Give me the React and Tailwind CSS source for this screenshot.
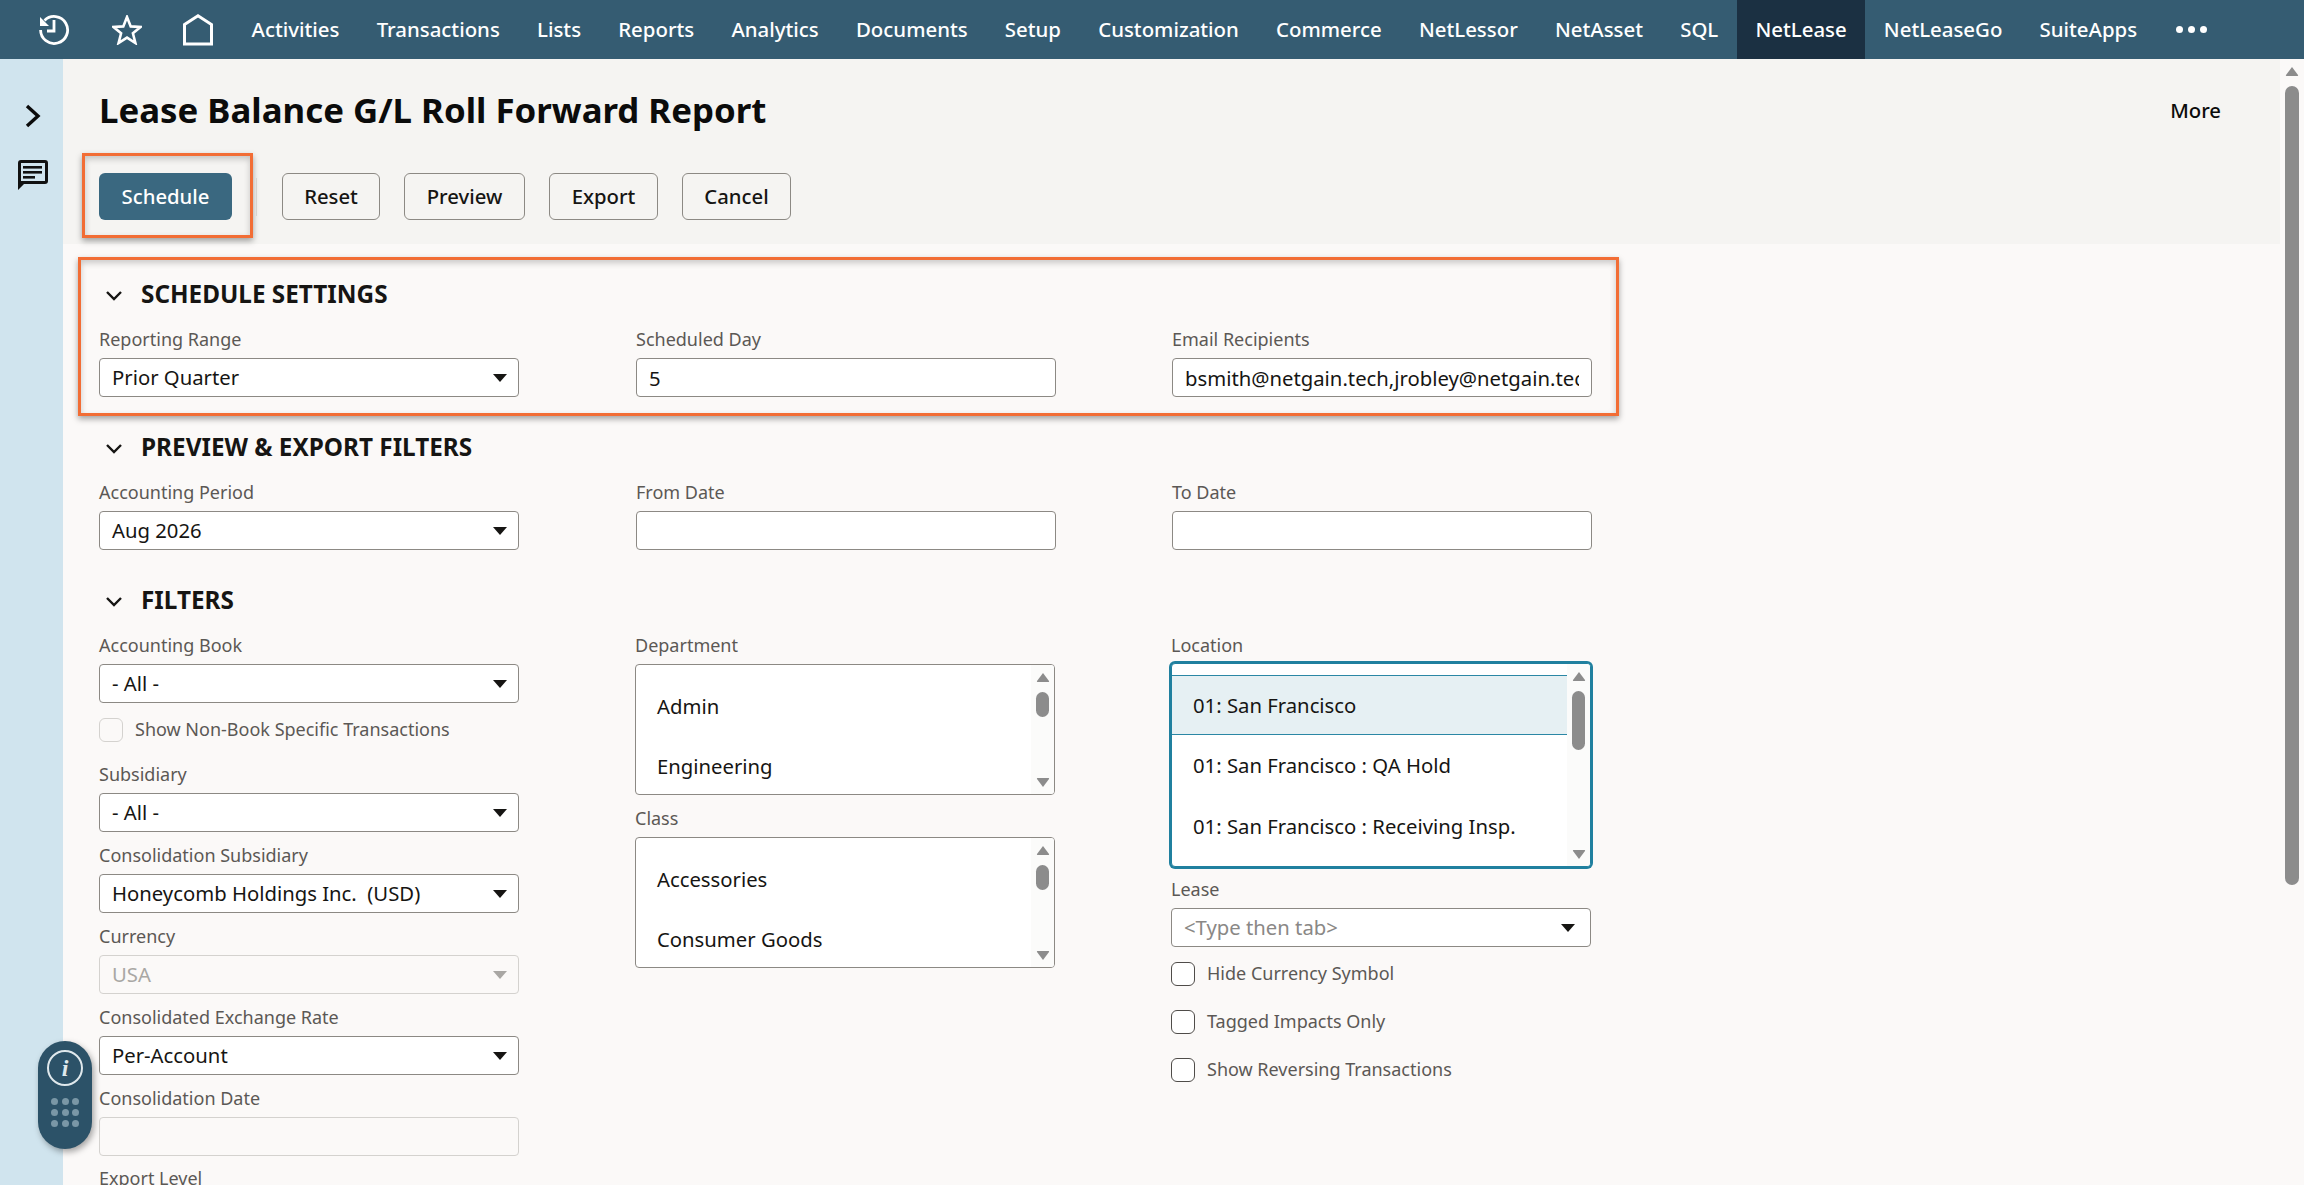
const FONT = "font-['Noto_Sans',sans-serif]";
const NAV = [
  ["Activities", false], ["Transactions", false], ["Lists", false], ["Reports", false], ["Analytics", false],
  ["Documents", false], ["Setup", false], ["Customization", false], ["Commerce", false], ["NetLessor", false],
  ["NetAsset", false], ["SQL", false], ["NetLease", true], ["NetLeaseGo", false], ["SuiteApps", false],
];

function Tri({ up, className }) {
  return (
    <svg width="14" height="11" viewBox="0 0 14 11" className={className}>
      <path d={up ? "M7 1 L13 9 Q13.5 10 12.5 10 L1.5 10 Q.5 10 1 9 Z" : "M7 10 L13 2 Q13.5 1 12.5 1 L1.5 1 Q.5 1 1 2 Z"} fill="#8c8c8c" />
    </svg>
  );
}

function Caret({ disabled }) {
  return (
    <svg width="14" height="8" viewBox="0 0 14 8" className="shrink-0">
      <path d="M0 0 H14 L7 8 Z" fill={disabled ? "#a9a7a4" : "#161513"} />
    </svg>
  );
}

function Chevron() {
  return (
    <svg width="18" height="11" viewBox="0 0 18 11" className="shrink-0">
      <path d="M2 2 L9 9 L16 2" fill="none" stroke="#161513" strokeWidth="2.4" />
    </svg>
  );
}

function Label({ children }) {
  return <div className="h-[30px] pb-[8px] flex items-center text-[18px] leading-[22px] text-[#5b5855] whitespace-nowrap">{children}</div>;
}

function Select({ label, value, disabled, placeholder }) {
  const tone = disabled ? "border-[#d4d2cf] text-[#a9a7a4]" : placeholder ? "border-[#8c8984] bg-white text-[#8a8886] pr-[15px]" : "border-[#8c8984] bg-white text-[#161513]";
  return (
    <div className="w-[420px]">
      <Label>{label}</Label>
      <div className={`h-[39px] rounded-[4px] border flex items-center justify-between pl-[12px] pr-[11px] text-[20.3px] whitespace-pre ${tone}`}>
        <span>{value}</span>
        <Caret disabled={disabled} />
      </div>
    </div>
  );
}

function TextInput({ label, value = "", disabled }) {
  return (
    <div className="w-[420px]">
      <Label>{label}</Label>
      <input readOnly value={value} disabled={disabled} className={`block w-full h-[39px] rounded-[4px] border px-[12px] text-[20.3px] text-[#161513] outline-none ${disabled ? "border-[#d4d2cf] bg-transparent" : "border-[#8c8984] bg-white"}`} />
    </div>
  );
}

function ListBox({ label, items, thumb = 25, focus, height = 131 }) {
  return (
    <div className="w-[420px]">
      <Label>{label}</Label>
      <div style={{ height }} className={`rounded-[4px] flex overflow-hidden bg-white ${focus ? "border border-[#20809f] ring-2 ring-[#20809f] -mt-[1px]" : "border border-[#8c8984]"}`}>
        <div className="flex-1 min-w-0 pt-[11px] text-[20.3px] text-[#161513]">
          {items.map((it, i) => (
            <div key={it} className={`flex items-center pl-[21px] whitespace-nowrap ${focus && i === 0 ? "h-[60px] bg-[#e6f0f3] border-y border-[#2b87a5]" : focus ? "h-[61px]" : "h-[60px]"}`}>{it}</div>
          ))}
        </div>
        <div className="w-[23px] shrink-0 bg-[#fbfbfa] flex flex-col items-center justify-between pt-[7px] pb-[6px]">
          <div className="flex flex-col items-center gap-[9px]">
            <Tri up />
            <div style={{ height: thumb }} className="w-[13px] rounded-full bg-[#8c8c8c]" />
          </div>
          <Tri />
        </div>
      </div>
    </div>
  );
}

function Check({ label, faint, className = "" }) {
  return (
    <div className={`flex items-center gap-[12px] h-[24px] ${className}`}>
      <div className={`w-[24px] h-[24px] rounded-[6px] border ${faint ? "border-[#d4d2cf]" : "border-[#4f4c49] bg-white"}`} />
      <span className="text-[18px] leading-[22px] pb-[2px] text-[#5b5855] whitespace-nowrap">{label}</span>
    </div>
  );
}

function SectionHead({ children, className = "" }) {
  return (
    <div className={`flex items-center h-[30px] pl-[6px] gap-[18px] ${className}`}>
      <Chevron />
      <h2 className="text-[24.3px] leading-[28px] pb-[2px] font-bold uppercase text-[#161513] whitespace-nowrap">{children}</h2>
    </div>
  );
}

function Btn({ children, w }) {
  return <button style={{ width: w }} className="h-[47px] rounded-[6px] border border-[#8c8984] text-[20.3px] font-medium text-[#161513]">{children}</button>;
}

export default function App() {
  return (
    <div className={`h-screen overflow-hidden relative flex flex-col bg-[#fbf9f8] ${FONT}`}>
      <nav className="h-[59px] shrink-0 bg-[#355c72] flex items-stretch text-white">
        <div className="w-[233px] shrink-0 relative flex items-center">
          <svg width="32" height="32" viewBox="0 0 32 32" fill="none" stroke="white" strokeWidth="2.8" className="ml-[38px]">
            <path d="M6.5 6.5 A13.5 13.5 0 1 1 2.6 16" />
            <path d="M2 3 L2 12 L11 12 Z" fill="white" stroke="none" />
            <path d="M16 6 V17 H9" />
          </svg>
          <svg width="30" height="30" viewBox="0 0 30 30" fill="none" stroke="white" strokeWidth="2.6" className="ml-[42px]">
            <path d="M15 2 L18.7 11.4 L28.5 12 L20.9 18.3 L23.4 28 L15 22.6 L6.6 28 L9.1 18.3 L1.5 12 L11.3 11.4 Z" />
          </svg>
          <svg width="30" height="32" viewBox="0 0 30 32" fill="none" stroke="white" strokeWidth="3" className="ml-[41px]">
            <path d="M1.5 10.5 L15 1.8 L28.5 10.5 V30 H1.5 Z" />
          </svg>
        </div>
        {NAV.map(([t, active]) => (
          <a key={t} className={`px-[18.6px] flex items-center text-[20.4px] font-medium whitespace-nowrap ${active ? "bg-[#1b3042]" : ""}`}>{t}</a>
        ))}
        <div className="ml-[20px] flex items-center gap-[5px]">
          <span className="w-[7px] h-[7px] rounded-full bg-white" />
          <span className="w-[7px] h-[7px] rounded-full bg-white" />
          <span className="w-[7px] h-[7px] rounded-full bg-white" />
        </div>
      </nav>

      <div className="flex-1 min-h-0 flex">
        <aside className="w-[63px] shrink-0 bg-[#d0e4ee] flex flex-col items-center pt-[45px] gap-[32px] pl-[2px]">
          <svg width="16" height="24" viewBox="0 0 16 24" fill="none" stroke="#0b0b0b" strokeWidth="3.4">
            <path d="M2 2 L13 12 L2 22" />
          </svg>
          <svg width="30" height="30" viewBox="0 0 30 30">
            <path d="M3 0 H27 Q30 0 30 3 V21 Q30 24 27 24 H6 L0 30 V3 Q0 0 3 0 Z" fill="#111" />
            <rect x="3" y="3" width="24" height="18" fill="#d0e4ee" />
            <rect x="5" y="6" width="19" height="2.6" fill="#111" />
            <rect x="5" y="11" width="19" height="2.6" fill="#111" />
            <rect x="5" y="16" width="12" height="2.6" fill="#111" />
          </svg>
        </aside>

        <main className="flex-1 min-w-0">
          <header className="h-[185px] bg-[#f5f4f2] pl-[36px] pr-[59px]">
            <div className="flex items-center justify-between pt-[31px] h-[71px]">
              <h1 className="text-[34.8px] leading-[40px] font-bold text-[#0b0b0b] whitespace-nowrap">Lease Balance G/L Roll Forward Report</h1>
              <span className="text-[20.3px] font-medium text-[#0b0b0b]">More</span>
            </div>
            <div className="mt-[43px] flex items-center">
              <button className="w-[133px] h-[47px] rounded-[6px] bg-[#3a6880] text-white text-[20.3px] font-medium">Schedule</button>
              <div className="w-px h-[38px] bg-[#e0dedb] ml-[24px] mr-[25px]" />
              <div className="flex gap-[24px]">
                <Btn w={98}>Reset</Btn>
                <Btn w={121}>Preview</Btn>
                <Btn w={109}>Export</Btn>
                <Btn w={109}>Cancel</Btn>
              </div>
            </div>
          </header>

          <div className="pl-[36px] pt-[36px]">
            <SectionHead>Schedule Settings</SectionHead>
            <div className="mt-[18px] grid grid-cols-[537px_536px_420px]">
              <Select label="Reporting Range" value="Prior Quarter" />
              <TextInput label="Scheduled Day" value="5" />
              <TextInput label="Email Recipients" value="bsmith@netgain.tech,jrobley@netgain.tech" />
            </div>

            <SectionHead className="mt-[36px]">Preview &amp; Export Filters</SectionHead>
            <div className="mt-[18px] grid grid-cols-[537px_536px_420px]">
              <Select label="Accounting Period" value="Aug 2026" />
              <TextInput label="From Date" />
              <TextInput label="To Date" />
            </div>

            <SectionHead className="mt-[36px]">Filters</SectionHead>
            <div className="mt-[18px] grid grid-cols-[536px_536px_420px] items-start">
              <div className="flex flex-col">
                <Select label="Accounting Book" value="- All -" />
                <Check faint label="Show Non-Book Specific Transactions" className="mt-[15px]" />
                <div className="mt-[21px]"><Select label="Subsidiary" value="- All -" /></div>
                <div className="mt-[12px]"><Select label="Consolidation Subsidiary" value="Honeycomb Holdings Inc.  (USD)" /></div>
                <div className="mt-[12px]"><Select label="Currency" value="USA" disabled /></div>
                <div className="mt-[12px]"><Select label="Consolidated Exchange Rate" value="Per-Account" /></div>
                <div className="mt-[12px]"><TextInput label="Consolidation Date" disabled /></div>
                <div className="mt-[11px]"><Label>Export Level</Label></div>
              </div>
              <div className="flex flex-col gap-[12px]">
                <ListBox label="Department" items={["Admin", "Engineering"]} />
                <ListBox label="Class" items={["Accessories", "Consumer Goods"]} />
              </div>
              <div className="flex flex-col">
                <ListBox focus height={204} thumb={59} label="Location" items={["01: San Francisco", "01: San Francisco : QA Hold", "01: San Francisco : Receiving Insp."]} />
                <div className="mt-[11px]"><Select label="Lease" value="<Type then tab>" placeholder /></div>
                <Check label="Hide Currency Symbol" className="mt-[15px]" />
                <Check label="Tagged Impacts Only" className="mt-[24px]" />
                <Check label="Show Reversing Transactions" className="mt-[24px]" />
              </div>
            </div>
          </div>
        </main>

        <div className="w-[24px] shrink-0 flex flex-col items-center pt-[7px] gap-[9px]">
          <Tri up />
          <div className="w-[14px] h-[799px] rounded-full bg-[#8c8c8c]" />
        </div>
      </div>

      <div className="absolute left-[82px] top-[153px] w-[171px] h-[85px] border-[3px] border-[#f26d35] shadow-[0_3px_6px_rgba(0,0,0,0.35),inset_0_3px_6px_rgba(0,0,0,0.2)]" />
      <div className="absolute left-[78px] top-[257px] w-[1541px] h-[159px] border-[3px] border-[#f26d35] shadow-[0_3px_6px_rgba(0,0,0,0.35),inset_0_3px_6px_rgba(0,0,0,0.2)]" />

      <div className="absolute left-[38px] top-[1041px] w-[54px] h-[108px] rounded-full bg-[#2c5268] shadow-[2px_3px_6px_rgba(0,0,0,0.35)] flex flex-col items-center pt-[9px]">
        <div className="w-[36px] h-[36px] rounded-full border-2 border-[#dfe8ec] flex items-center justify-center text-[#dfe8ec] text-[24px] italic font-bold font-['Liberation_Serif',serif] leading-none">i</div>
        <div className="mt-[12px] grid grid-cols-3 gap-x-[3.5px] gap-y-[4px]">
          {[...Array(9)].map((_, i) => <span key={i} className="w-[7px] h-[7px] rounded-full bg-[#7a97a6]" />)}
        </div>
      </div>
    </div>
  );
}
